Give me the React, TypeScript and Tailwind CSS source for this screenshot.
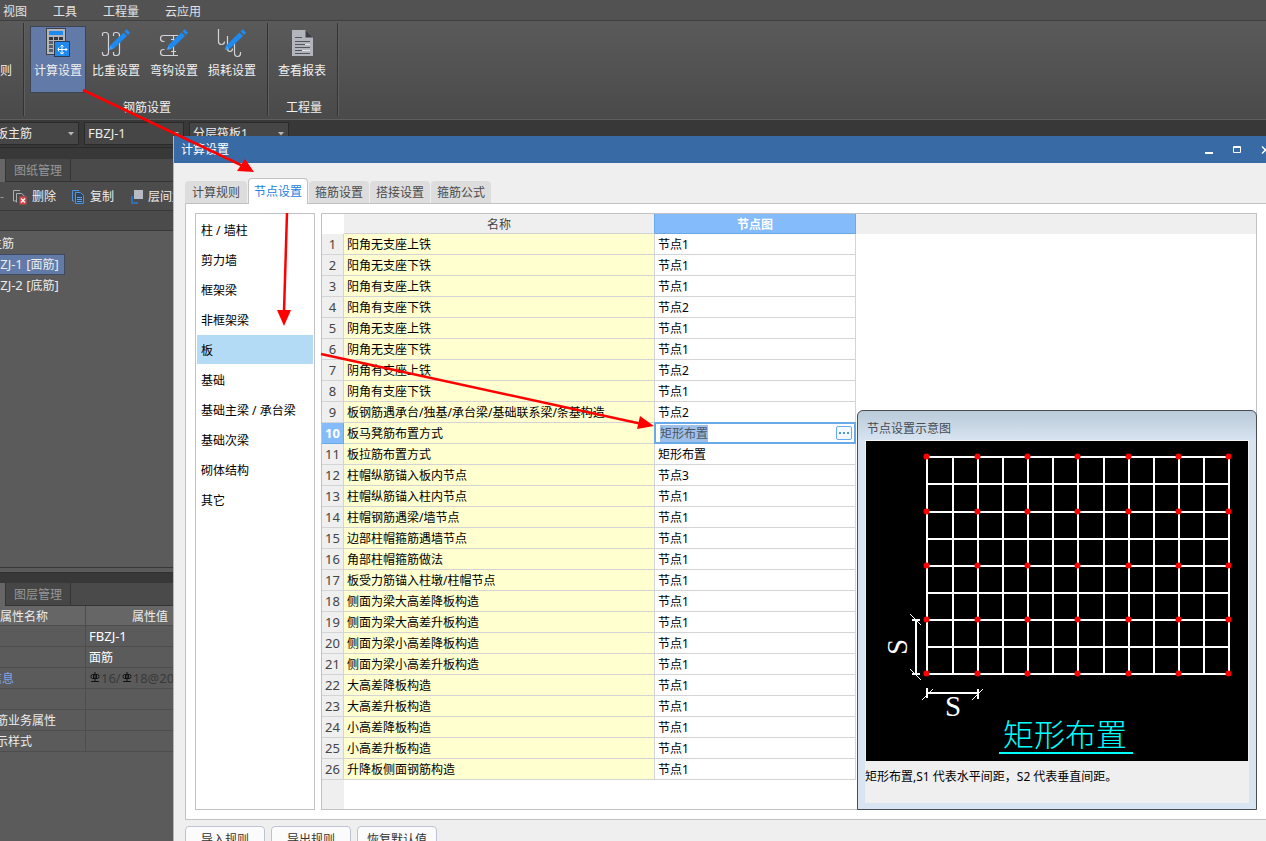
import React from "react";

const menus = ["视图", "工具", "工程量", "云应用"];
const tabs = ["计算规则", "节点设置", "箍筋设置", "搭接设置", "箍筋公式"];
const categories = ["柱 / 墙柱", "剪力墙", "框架梁", "非框架梁", "板", "基础", "基础主梁 / 承台梁", "基础次梁", "砌体结构", "其它"];
const rows: [string, string][] = [
  ["阳角无支座上铁", "节点1"],
  ["阳角无支座下铁", "节点1"],
  ["阳角有支座上铁", "节点1"],
  ["阳角有支座下铁", "节点2"],
  ["阴角无支座上铁", "节点1"],
  ["阴角无支座下铁", "节点1"],
  ["阴角有支座上铁", "节点2"],
  ["阴角有支座下铁", "节点1"],
  ["板钢筋遇承台/独基/承台梁/基础联系梁/条基构造", "节点2"],
  ["板马凳筋布置方式", "矩形布置"],
  ["板拉筋布置方式", "矩形布置"],
  ["柱帽纵筋锚入板内节点", "节点3"],
  ["柱帽纵筋锚入柱内节点", "节点1"],
  ["柱帽钢筋遇梁/墙节点", "节点1"],
  ["边部柱帽箍筋遇墙节点", "节点1"],
  ["角部柱帽箍筋做法", "节点1"],
  ["板受力筋锚入柱墩/柱帽节点", "节点1"],
  ["侧面为梁大高差降板构造", "节点1"],
  ["侧面为梁大高差升板构造", "节点1"],
  ["侧面为梁小高差降板构造", "节点1"],
  ["侧面为梁小高差升板构造", "节点1"],
  ["大高差降板构造", "节点1"],
  ["大高差升板构造", "节点1"],
  ["小高差降板构造", "节点1"],
  ["小高差升板构造", "节点1"],
  ["升降板侧面钢筋构造", "节点1"],
];

function CalcIcon() {
  return (
    <svg className="size-8" viewBox="0 0 32 32">
      <rect x="4.5" y="1.5" width="19" height="26" fill="#b4b6bb" stroke="#3f434a" />
      <rect x="7" y="4" width="14" height="4" fill="#1e8af0" />
      {[10, 14, 18, 22].map((y) =>
        [7, 12, 17].map((x) => <rect key={`${x}-${y}`} x={x} y={y} width="4" height="3" fill={y === 10 ? "#33363b" : "#5c6068"} />)
      )}
      <rect x="12.5" y="14.5" width="15" height="15" fill="#1e8af0" stroke="#2d3b52" />
      <path d="M20 18v9M16 22.500h9M18.500 19.500L20 18l1.500 1.500M23.500 21l1.500 1.500-1.500 1.500M17 20.500L16 22.500l1 2M18 25.500l2 1.500 2-1.500" fill="none" stroke="#fff" strokeWidth="1" />
    </svg>
  );
}

function Pencil() {
  return (
    <g>
      <path d="M9 23l1.500-5L23.500 5.500l3.500 3.500L14 21.500z" fill="#1e8af0" />
      <path d="M24.500 4.500l2.200-2.200 3.500 3.500-2.200 2.200z" fill="#1e8af0" />
      <path d="M9 23l1.300-4.300 3 3z" fill="#3f9df5" />
    </g>
  );
}

function WeightIcon() {
  return (
    <svg className="size-8" viewBox="0 0 32 32">
      <g fill="none" stroke="#d2d4d8" strokeWidth="1.200">
        <path d="M2.500 9V7.500Q2.500 5.500 4.500 5.500H5.500Q8.500 5.500 8.500 8.500V25.500Q8.500 28.500 5.500 28.500H4.500Q2.500 28.500 2.500 26.500V25" />
        <path d="M13.500 9V7.500Q13.500 5.500 15.500 5.500H16.500Q19.500 5.500 19.500 8.500V25.500Q19.500 28.500 16.500 28.500H15.500Q13.500 28.500 13.500 26.500V25" />
      </g>
      <Pencil />
    </svg>
  );
}

function HookIcon() {
  return (
    <svg className="size-8" viewBox="0 0 32 32">
      <g fill="none" stroke="#d2d4d8" strokeWidth="1.200">
        <path d="M20 8.500H5.500Q2.500 8.500 2.500 11.500T5.500 14.500H6.500M6.500 22.500H5.500Q2.500 22.500 2.500 25.500T5.500 28.500H20M15.500 8.500V28.500M13 12.500h5M13 24.500h5" />
      </g>
      <Pencil />
    </svg>
  );
}

function LossIcon() {
  return (
    <svg className="size-8" viewBox="0 0 32 32">
      <g fill="none" stroke="#d2d4d8" strokeWidth="1.200">
        <path d="M2.500 2V14.500Q2.500 17.500 5.500 17.500Q8.500 17.500 8.500 14.500M11.500 9V21.500Q11.500 24.500 14 24.500Q16.500 24.500 16.500 21.500M18.500 13V25.500Q18.500 29.500 21.500 29.500Q24.500 29.500 24.500 26.500V25" />
      </g>
      <Pencil />
    </svg>
  );
}

function ReportIcon() {
  return (
    <svg className="size-8" viewBox="0 0 32 32">
      <path d="M6 3H19.500L27 10.500V29H6z" fill="#b2b5bb" />
      <path d="M19.500 3L27 10.500H19.500z" fill="#3b3e45" />
      <path d="M9 10.500h7M9 14.500h15M9 17.500h10M9 20.500h15M9 23.500h7M9 26.500h15" stroke="#51555d" strokeWidth="1" />
      <path d="M19 17.500h5M16 23.500h8" stroke="#e3e4e8" strokeWidth="1" />
    </svg>
  );
}

function RibbonButton({ label, icon, active }: { label: string; icon: React.ReactNode; active?: boolean }) {
  return (
    <button
      type="button"
      className={`flex h-[67px] w-14 flex-col items-center whitespace-nowrap border ${
        active ? "border-[#3d4452] bg-[#617aa8]" : "border-transparent"
      }`}
    >
      {icon}
      <span className="mt-1 leading-4">{label}</span>
    </button>
  );
}

function Divider() {
  return <div className="mt-0.5 h-[93px] w-0.5 border-l border-[#333333] bg-[#5f5f5f]" />;
}

function Combo({ label, value, cut, latin }: { label: string; value: string; cut?: boolean; latin?: boolean }) {
  return (
    <div className={`relative flex h-[23px] justify-end overflow-hidden border border-[#2a2a2a] bg-[#464646] ${cut ? "w-[79px] border-l-0" : "w-[100px]"}`}>
      <select
        aria-label={label}
        defaultValue={value}
        className={`h-full shrink-0 appearance-none bg-transparent text-[#ececec] outline-none ${cut ? "w-[82px]" : "w-[95px]"} ${latin ? "text-[13px]" : ""}`}
      >
        <option>{value}</option>
      </select>
      <svg className="pointer-events-none absolute right-1 top-[9px] h-1 w-1.5" viewBox="0 0 6 4">
        <path d="M0 0H6L3 3.500z" fill="#b8b8b8" />
      </svg>
    </div>
  );
}

function DockTabs({ label }: { label: string }) {
  return (
    <div className="flex h-[23px] border-b border-[#353535] bg-[#4a4a4a]">
      <div className="h-[23px] w-[5px] bg-[#666666]" />
      <button type="button" className="w-[66px] border-x border-[#353535] bg-[#464646] pt-0.5 text-[#979797]">
        {label}
      </button>
    </div>
  );
}

function DeleteIcon() {
  return (
    <svg className="size-4" viewBox="0 0 16 16">
      <path d="M4 12H1.500V1.500H8M4.500 13.500V4.500H9.500L12.500 7" fill="none" stroke="#aaaeb5" />
      <rect x="7.500" y="7.500" width="7" height="8" fill="#d8474c" />
      <path d="M9 9.500l4 4M13 9.500l-4 4" stroke="#fff" strokeWidth="1.200" />
    </svg>
  );
}

function CopyIcon() {
  return (
    <svg className="size-4" viewBox="0 0 16 16">
      <path d="M3 12H1.500V1.500H8" fill="none" stroke="#4b93e4" />
      <path d="M4.500 3.500H9.500L12.500 6.500V14.500H4.500z" fill="#2f435c" stroke="#4b93e4" />
      <path d="M6 8.500h5M6 10.500h5M6 12.500h5" stroke="#5ba3f3" />
    </svg>
  );
}

function LayerIcon() {
  return (
    <svg className="size-4" viewBox="0 0 16 16">
      <path d="M2 7v7h6" fill="none" stroke="#2f6fb8" strokeWidth="2" />
      <rect x="3.500" y=".5" width="10" height="10" fill="#b7bbc4" stroke="#4c4c4c" />
    </svg>
  );
}

function RebarMark() {
  return (
    <svg className="mx-px mb-0.5 h-2.5 w-2.5" viewBox="0 0 10 10">
      <path d="M5 0V9.500M1 9.500H9M2.500 2.500H7.500Q9 2.500 9 4.500T7.500 6.500H2.500Q1 6.500 1 4.500T2.500 2.500M3.500 2.500v4M6.500 2.500v4" fill="none" stroke="#111" strokeWidth="1" />
    </svg>
  );
}

function Sidebar() {
  const props: [string, React.ReactNode, string][] = [
    ["", <span className="text-[13px]">FBZJ-1</span>, ""],
    ["", "面筋", ""],
    [
      "信息",
      <span className="flex items-center text-[13px] text-[#393939]">
        <RebarMark />16/<RebarMark />18@200
      </span>,
      "pl-1.5 text-[#7fa5ee]",
    ],
    ["", "", ""],
    ["钢筋业务属性", "", ""],
    ["显示样式", "", ""],
  ];
  return (
    <aside className="flex w-[214px] flex-1 flex-col overflow-hidden bg-[#5b5b5b] text-[#ececec]">
      <DockTabs label="图纸管理" />
      <div className="flex h-[29px] shrink-0 items-center border-b border-[#383838] bg-[#4c4c4c] pt-0.5">
        <span className="w-3 shrink-0 overflow-hidden text-[#999999]">-</span>
        <button type="button" className="flex w-[59px] shrink-0 items-center gap-1">
          <DeleteIcon />
          删除
        </button>
        <button type="button" className="flex w-[59px] shrink-0 items-center gap-[3px]">
          <CopyIcon />
          复制
        </button>
        <button type="button" className="flex shrink-0 items-center gap-0.5">
          <LayerIcon />
          层间复制
        </button>
      </div>
      <div className="h-5 shrink-0 border-b border-[#383838] bg-[#4b4b4b]" />
      <ul className="-ml-[22px] flex-1 pt-0.5 leading-[21px]">
        <li>板主筋</li>
        <li className="w-[87px] border border-[#3f4a60] bg-[#617aa8] pl-1.5 leading-[19px]">
          <span className="text-[13px]">FBZJ-1 [</span>面筋<span className="text-[13px]">]</span>
        </li>
        <li className="pl-[7px]">
          <span className="text-[13px]">FBZJ-2 [</span>底筋<span className="text-[13px]">]</span>
        </li>
      </ul>
      <div className="h-[5px] border-t border-[#383838]" />
      <div className="h-[11px] border-t border-[#303030] bg-[#383838]" />
      <DockTabs label="图层管理" />
      <div className="h-[235px]">
        <table className="-ml-4 w-[230px] table-fixed border-separate border-spacing-0">
          <thead>
            <tr className="h-5 bg-[#666666]">
              <th className="w-[102px] border-b border-r border-[#4d4d4d] p-0 pl-4 pt-0.5 text-left font-normal leading-[17px]">属性名称</th>
              <th className="border-b border-[#4d4d4d] p-0 pt-0.5 font-normal leading-[17px]">属性值</th>
            </tr>
          </thead>
          <tbody>
            {props.map(([k, v, cls], i) => (
              <tr key={i} className="h-[21px]">
                <td className={`whitespace-nowrap border-b border-r border-[#4d4d4d] p-0 ${cls}`}>
                  <div className="flex h-5 items-center pt-0.5 leading-[18px]">{k}</div>
                </td>
                <td className="whitespace-nowrap border-b border-[#4d4d4d] p-0 pl-[3px] text-white">
                  <div className={`flex h-5 items-center leading-[18px] ${i === 1 ? "pt-0.5" : ""}`}>{v}</div>
                </td>
              </tr>
            ))}
          </tbody>
        </table>
      </div>
    </aside>
  );
}

function NodeTable() {
  return (
    <div className="flex min-w-0 flex-1 flex-col border border-[#c2c2c6] bg-white">
      <table className="w-full table-fixed border-separate border-spacing-0">
        <thead>
          <tr className="h-5 text-[#444444]">
            <th className="w-[22px] p-0" />
            <th className="w-[311px] border-b border-r border-[#d4d4d4] border-r-[#68a9e8] bg-[#efefef] p-0 pt-0.5 font-normal leading-[17px]">名称</th>
            <th className="w-[201px] border-b border-r border-[#68a9e8] bg-[#84bbfb] p-0 pt-0.5 font-bold leading-[17px] text-white">节点图</th>
            <th className="bg-[#efefef] p-0" />
          </tr>
        </thead>
        <tbody>
          {rows.map(([name, value], i) => {
            const active = i === 9;
            return (
              <tr key={i} className="h-[21px]">
                <td
                  className={`border-b border-r p-0 text-center text-[13px] leading-5 ${
                    active ? "border-[#68a9e8] bg-[#84bbfb] font-bold text-white" : "border-[#d4d4d4] bg-[#efefef] text-[#444444]"
                  }`}
                >
                  {i + 1}
                </td>
                <td className="whitespace-nowrap border-b border-r border-[#d4d4d4] bg-[#ffffcf] p-0 pl-[3px] pt-0.5 leading-[18px]">{name}</td>
                <td className={`border-b border-r border-[#d4d4d4] p-0 leading-[18px] ${active ? "" : "pl-[3px] pt-0.5"}`}>
                  {active ? (
                    <div className="relative -mx-px -my-px flex h-[22px] items-center justify-between border-2 border-[#68a9e8] bg-white pl-1 pr-0.5">
                      <input aria-label={name} defaultValue={value} className="h-[17px] w-12 bg-[#9dc0ea] pt-px text-[#4b5563] outline-none" />
                      <button type="button" aria-label="选择节点" className="flex h-3.5 w-4 items-center justify-center gap-0.5 rounded-xs border border-[#68a9e8] bg-[#f2f8ff]">
                        <i className="size-0.5 bg-[#4f95dc]" />
                        <i className="size-0.5 bg-[#4f95dc]" />
                        <i className="size-0.5 bg-[#4f95dc]" />
                      </button>
                    </div>
                  ) : (
                    value
                  )}
                </td>
                <td className="p-0" />
              </tr>
            );
          })}
        </tbody>
      </table>
      <div className="w-[22px] flex-1 bg-[#efefef]" />
    </div>
  );
}

const gridX = [61, 87, 112, 137, 162, 187, 212, 238, 263, 288, 313, 338, 363];
const gridY = [16, 43, 71, 98, 125, 152, 179, 206, 233];

function NodeDiagram() {
  return (
    <svg className="block h-80 w-[382px] bg-black" viewBox="0 0 382 320">
      <g stroke="#fff" strokeWidth="2">
        {gridX.map((x) => <line key={x} x1={x} x2={x} y1="15" y2="234" />)}
        {gridY.map((y) => <line key={y} x1="60" x2="364" y1={y} y2={y} />)}
        <path d="M50 179V233M46 179h8M46 233h8M61 252H112M61 247v10M112 248v10" />
      </g>
      <path d="M44 173L55 184M44 228L55 239M56 259L67 248M106 259L117 248" stroke="#fff" />
      <g fill="#f00">
        {gridY.filter((_, i) => i % 2 === 0).map((y) =>
          gridX.filter((_, i) => i % 2 === 0).map((x) => <circle key={`${x}-${y}`} cx={x - 0.5} cy={y - 0.5} r="3" />)
        )}
      </g>
      <g fill="#fff" fontFamily="Liberation Serif, serif" fontSize="29" textAnchor="middle">
        <text x="87" y="275">S</text>
        <text transform="translate(41 206) rotate(-90)">S</text>
      </g>
      <text x="137" y="305" fill="#0ff" fontSize="31" fontWeight="300">矩形布置</text>
      <path d="M133 312H267" stroke="#0ff" strokeWidth="2" />
    </svg>
  );
}

function NodePopup() {
  return (
    <section className="absolute left-[857px] top-[410px] h-[400px] w-[400px] rounded-t-md border border-[#4a4d52] bg-[#d8e4f1] bg-linear-to-b from-[#bacad9] to-[#d8e4f1] to-[30px] px-[7px] pb-[7px]">
      <h2 className="h-[29px] pl-0.5 pt-1.5 leading-6 text-[#444c55]">节点设置示意图</h2>
      <div className="h-[363px] w-[384px] border border-t-[#f4f6f8] border-[#efefef] bg-[#efefef]">
        <NodeDiagram />
        <p className="-ml-px mt-[6px] leading-5 text-black">矩形布置,S1 代表水平间距，S2 代表垂直间距。</p>
      </div>
    </section>
  );
}

function SettingsDialog() {
  return (
    <section className="absolute -right-3 bottom-0 left-[173px] top-[136px] flex flex-col overflow-hidden border-l border-[#aeb6c2] bg-[#efefef]">
      <header className="flex h-[27px] shrink-0 items-center justify-between bg-[#386aa6] pl-[7px] pr-2 text-white">
        <h1>计算设置</h1>
        <div className="flex gap-[19px]">
          <button type="button" aria-label="最小化">
            <svg className="h-2.5 w-[9px]" viewBox="0 0 9 10"><path d="M0 8h8" stroke="#fff" strokeWidth="2" /></svg>
          </button>
          <button type="button" aria-label="最大化">
            <svg className="h-2.5 w-[9px]" viewBox="0 0 9 10"><path d="M.5 1.500h7v6h-7zM0 2.500h8" fill="none" stroke="#fff" /></svg>
          </button>
          <button type="button" aria-label="关闭">
            <svg className="h-2.5 w-[9px]" viewBox="0 0 9 10"><path d="M1 1.500l7 7M8 1.500l-7 7" stroke="#fff" strokeWidth="1.500" /></svg>
          </button>
        </div>
      </header>
      <nav className="relative mt-[15px] -mb-px flex h-[26px] shrink-0 items-end gap-px pl-[11px]">
        {tabs.map((t, i) =>
          i === 1 ? (
            <button key={t} type="button" className="h-[26px] w-[60px] rounded-t-sm border border-b-0 border-[#c2c2c6] bg-white text-[#2680e0]">
              {t}
            </button>
          ) : (
            <button key={t} type="button" className={`mb-px h-[22px] rounded-t-sm bg-[#dddddd] pt-0.5 text-[#4a4a4a] ${i === 0 ? "w-[62px]" : "w-[60px]"}`}>
              {t}
            </button>
          )
        )}
      </nav>
      <div className="ml-[11px] flex h-[617px] shrink-0 gap-1.5 border-y border-l border-[#c2c2c6] bg-white py-[9px] pl-[9px] pr-[21px]">
        <ul className="w-[120px] shrink-0 border border-[#c2c2c6] px-px py-px">
          {categories.map((c) => (
            <li key={c} className="h-[30px]">
              <button type="button" className={`h-[29px] w-full whitespace-nowrap pl-1 pt-0.5 text-left ${c === "板" ? "bg-[#b3dbf5]" : ""}`}>
                {c}
              </button>
            </li>
          ))}
        </ul>
        <NodeTable />
      </div>
      <footer className="ml-[11px] mt-1.5 flex shrink-0 gap-1.5">
        {["导入规则", "导出规则", "恢复默认值"].map((b) => (
          <button key={b} type="button" className="h-[26px] w-20 rounded-sm border border-[#bcc4d4] bg-[#fbfbfb] pt-0.5 text-[#333333]">
            {b}
          </button>
        ))}
      </footer>
    </section>
  );
}

function Arrows() {
  return (
    <svg className="pointer-events-none absolute left-0 top-0 h-[440px] w-[680px]" viewBox="0 0 680 440">
      <path d="M83 90L243 166M287 213L284 312M321 354L642 424" stroke="#f00" strokeWidth="2.500" />
      <path d="M254 172L245 159L237 171zM284 326L277 310H291zM654 426L640 416L637 429z" fill="#f00" />
    </svg>
  );
}

export default function App() {
  return (
    <div className="relative flex h-screen w-full flex-col overflow-hidden bg-[#383838] font-['Noto_Sans','Noto_Sans_CJK_SC',sans-serif] text-xs text-black">
      <nav className="flex h-[21px] shrink-0 items-center gap-[26px] border-b border-[#3f3f3f] bg-[#525252] pl-[3px] pt-[3px] text-[#e2e2e2]">
        {menus.map((m) => (
          <button key={m} type="button">{m}</button>
        ))}
      </nav>
      <div className="flex h-[99px] shrink-0 border-b border-[#5e5e5e] bg-linear-to-b from-[#5a5a5a] to-[#4a4a4a] text-[#f0f0f0]">
        <div className="flex w-[23px] justify-end overflow-hidden pr-[11px] pt-[42px] leading-4">
          <span className="shrink-0">规则</span>
        </div>
        <Divider />
        <div className="flex w-[242px] flex-col items-center pt-[5px]">
          <div className="flex gap-0.5 pr-0.5">
            <RibbonButton label="计算设置" icon={<CalcIcon />} active />
            <RibbonButton label="比重设置" icon={<WeightIcon />} />
            <RibbonButton label="弯钩设置" icon={<HookIcon />} />
            <RibbonButton label="损耗设置" icon={<LossIcon />} />
          </div>
          <div className="mt-[7px] pl-0.5 leading-4">钢筋设置</div>
        </div>
        <Divider />
        <div className="flex w-[68px] flex-col items-center pt-[5px]">
          <div className="pr-0.5">
            <RibbonButton label="查看报表" icon={<ReportIcon />} />
          </div>
          <div className="mt-[7px] pl-0.5 leading-4">工程量</div>
        </div>
        <Divider />
      </div>
      <div className="flex h-7 shrink-0 gap-[5px] border-b border-[#2a2a2a] pt-0.5">
        <Combo label="构件类型" value="板主筋" cut />
        <Combo label="构件名称" value="FBZJ-1" latin />
        <Combo label="分层" value="分层筏板1" />
      </div>
      <div className="h-[11px] shrink-0" />
      <Sidebar />
      <SettingsDialog />
      <NodePopup />
      <Arrows />
    </div>
  );
}
